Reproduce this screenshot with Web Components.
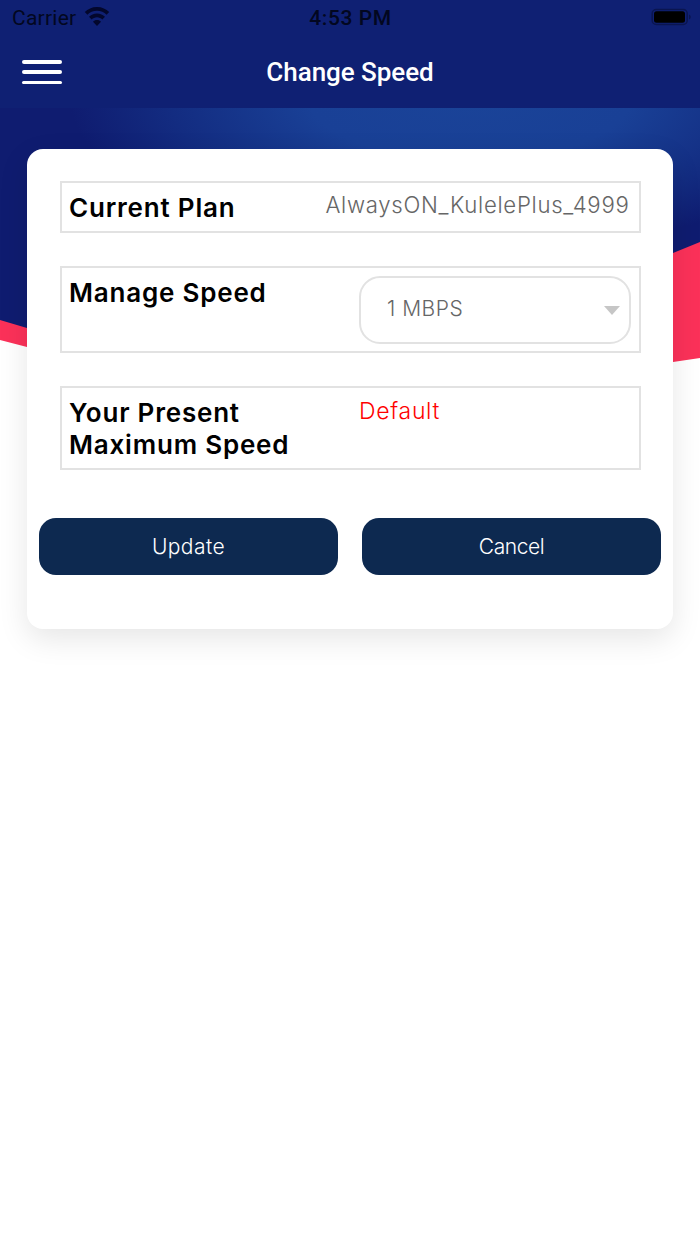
<!DOCTYPE html>
<html lang="en"><head><meta charset="utf-8"><title>Change Speed</title>
<style>
html,body{margin:0;padding:0;background:#fff;}
body{width:700px;height:1244px;overflow:hidden;font-family:Inter,"Liberation Sans",sans-serif;}
</style></head><body>
<speed-screen>
  <status-bar slot="top"></status-bar>
  <nav-header slot="top" title="Change Speed"></nav-header>
  <info-card>
    <info-row label="Current Plan" kind="plan"><span>AlwaysON_KulelePlus_4999</span></info-row>
    <info-row label="Manage Speed" kind="select"><speed-select value="1 MBPS"></speed-select></info-row>
    <info-row label="Your Present Maximum Speed" kind="present"><span>Default</span></info-row>
    <action-button slot="actions" style="letter-spacing:.45px">Update</action-button>
    <action-button slot="actions" style="letter-spacing:-.45px">Cancel</action-button>
  </info-card>
</speed-screen>
<script>
function def(name, html, extra){
  customElements.define(name, class extends HTMLElement{
    connectedCallback(){
      if(this.shadowRoot) return;
      const r=this.attachShadow({mode:'open'});
      r.innerHTML=html(this);
      if(extra) extra(this,r);
    }
  });
}
def('speed-screen',()=>`<style>
:host{display:block;position:relative;width:700px;height:1244px;background:#fff;overflow:hidden}
.top{display:block;position:relative;z-index:1;background:#0f2073}
.wave{position:absolute;left:0;top:108px;width:700px;height:260px;display:block}
.main{position:relative;z-index:1;padding:41px 27px 0}
</style>
<svg class="wave" viewBox="0 108 700 260" aria-hidden="true">
<defs><radialGradient id="g" gradientUnits="userSpaceOnUse" cx="0" cy="0" r="1" gradientTransform="translate(470 100) scale(400 150)">
<stop offset="0" stop-color="#1a4398"/><stop offset=".4" stop-color="#194096"/><stop offset=".75" stop-color="#132c81"/><stop offset="1" stop-color="#0f1c70"/></radialGradient></defs>
<rect x="0" y="108" width="700" height="260" fill="url(#g)"/>
<path d="M0 320 L27 328 C200 400 500 320 673 253 L700 242 V368 H0Z" fill="#fb3159"/>
<path d="M0 340 L27 347 C200 410 500 400 673 362 L700 358 V368 H0Z" fill="#fff"/>
</svg>
<div class="top"><slot name="top"></slot></div>
<div class="main"><slot></slot></div>`);
def('status-bar',()=>`<style>
:host{display:block;height:36px;position:relative;color:#020720;font:400 21px/36px Roboto,"Liberation Sans",sans-serif}
.row{display:grid;grid-template-columns:1fr auto 1fr;align-items:center;height:36px;padding:0 9px 0 12px}
.l{display:flex;align-items:center;gap:8px}
.t{font-weight:500;font-size:21px;letter-spacing:.6px;margin-left:-2px}
.r{justify-self:end;display:flex;align-items:center;margin-top:-2px}
.c{letter-spacing:.25px}
</style><div class="row">
<div class="l"><span class="c">Carrier</span>
<svg width="26" height="19" viewBox="0 0 26 19" style="margin-top:-3px"><path fill="#03072c" d="M13 0C8 0 3.800 2 .8 5l2.600 2.800C5.800 5.300 9.200 3.800 13 3.800s7.200 1.500 9.600 4L25.200 5C22.200 2 18 0 13 0zM13 6.500c-3.200 0-6 1.300-8 3.300l2.700 2.800c1.300-1.400 3.200-2.300 5.300-2.300s4 .9 5.300 2.300l2.700-2.800c-2-2-4.800-3.300-8-3.300zM13 13c-1.600 0-3 .6-4 1.700L13 19l4-4.300C16 13.600 14.600 13 13 13z"/></svg></div>
<div class="t">4:53 PM</div>
<div class="r"><svg width="40" height="18" viewBox="0 0 40 18"><rect x="1.200" y="1.500" width="35" height="15" rx="4" fill="none" stroke="#0a1550" stroke-width="1.500"/><rect x="3" y="3.200" width="31" height="11.600" rx="2.500" fill="#000"/><path d="M38 6.500c1.200.4 1.700 1.500 1.700 2.500s-.5 2.100-1.700 2.500z" fill="#0a1550"/></svg></div>
</div>`);
def('nav-header',(h)=>`<style>
:host{display:block;height:72px;position:relative}
.row{display:flex;align-items:center;justify-content:center;height:72px;position:relative;color:#fff;font:500 26px/1 Roboto,"Liberation Sans",sans-serif}
.menu{position:absolute;left:22px;top:24px;width:40px;height:24px;display:flex;flex-direction:column;justify-content:space-between}
.menu i{display:block;height:3.500px;background:#fff;border-radius:2px}
h1{margin:0;font:inherit;letter-spacing:-.05px}
</style><div class="row"><div class="menu"><i></i><i></i><i></i></div><h1>${h.getAttribute('title')}</h1></div>`);
def('info-card',()=>`<style>
:host{display:block;width:646px;height:480px;box-sizing:border-box;background:#fff;border-radius:16px;box-shadow:0 10px 30px rgba(0,0,0,.10);padding:32px 12px 0}
.rows{display:flex;flex-direction:column;gap:33px;padding:0 20.500px}
.acts{display:flex;gap:24px;margin-top:48px}
</style><div class="rows"><slot></slot></div><div class="acts"><slot name="actions"></slot></div>`);
def('info-row',(h)=>{
 const k=h.getAttribute('kind');
 const s={plan:'height:52px;align-items:center;justify-content:space-between;padding:0 9px 0 7.500px',
          select:'height:87px;padding:0 8px 0 7.500px',present:'height:84px;padding:0 8px 0 7.500px'}[k];
 const lab={plan:'padding-top:1px',select:'padding-top:9px;width:290px',present:'padding-top:9px;width:290px'}[k];
 const val={plan:'color:#666;font-size:22.200px;letter-spacing:.7px;padding-bottom:5px;font-weight:300',
            select:'padding-top:8px',present:'color:#f00;font-size:23px;font-weight:300;letter-spacing:.7px;padding-top:8px;line-height:30px'}[k];
 return `<style>
:host{display:flex;box-sizing:border-box;border:2px solid #e2e2e2;${s}}
.lab{color:#000;font:600 26px/32px Inter,"Liberation Sans",sans-serif;letter-spacing:.8px;box-sizing:border-box;flex:none;white-space:nowrap;${lab}}
.val{font-family:Inter,"Liberation Sans",sans-serif;${val}}
</style><div class="lab">${h.getAttribute('label').replace('Present ','Present<br>')}</div><div class="val"><slot></slot></div>`;
});
def('speed-select',(h)=>`<style>
:host{display:flex;align-items:center;justify-content:space-between;box-sizing:border-box;width:272px;height:68px;border:2px solid #e2e2e2;border-radius:21px;padding:0 9px 4px 26px;color:#666;font:300 21px/1 Inter,"Liberation Sans",sans-serif;letter-spacing:.5px}
i{display:block;width:0;height:0;border-left:8.500px solid transparent;border-right:8.500px solid transparent;border-top:9px solid #c6c6c6;margin-top:4px}
</style><span>${h.getAttribute('value')}</span><i></i>`);
def('action-button',()=>`<style>
:host{display:flex;align-items:center;justify-content:center;width:299px;height:57px;background:#0d2950;border-radius:17px;color:#fff;font:300 21px/1 Inter,"Liberation Sans",sans-serif}
</style><slot></slot>`);
</script>
</body></html>
